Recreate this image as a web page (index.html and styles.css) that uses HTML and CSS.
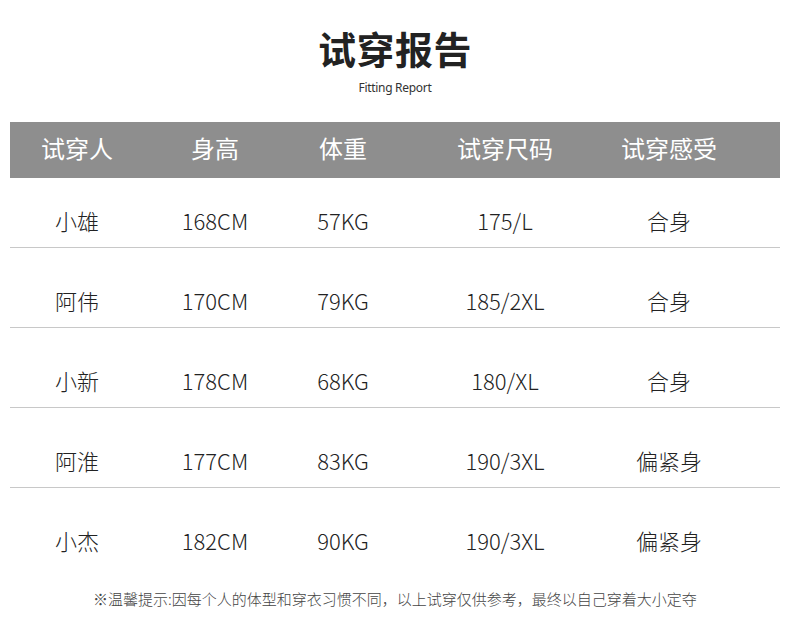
FILE: index.html
```html
<!DOCTYPE html>
<html lang="zh-CN">
<head>
<meta charset="utf-8">
<title>试穿报告</title>
<link rel="stylesheet" href="styles.css">
</head>
<body>
<div class="page">
  <div class="title">试穿报告</div>
  <div class="subtitle">Fitting Report</div>
  <div class="table">
    <div class="row head">
      <div class="c c1">试穿人</div><div class="c c2">身高</div><div class="c c3">体重</div><div class="c c4">试穿尺码</div><div class="c c5">试穿感受</div>
    </div>
    <div class="row">
      <div class="c c1">小雄</div><div class="c c2">168CM</div><div class="c c3">57KG</div><div class="c c4">175/L</div><div class="c c5">合身</div>
    </div>
    <div class="row">
      <div class="c c1">阿伟</div><div class="c c2">170CM</div><div class="c c3">79KG</div><div class="c c4">185/2XL</div><div class="c c5">合身</div>
    </div>
    <div class="row">
      <div class="c c1">小新</div><div class="c c2">178CM</div><div class="c c3">68KG</div><div class="c c4">180/XL</div><div class="c c5">合身</div>
    </div>
    <div class="row">
      <div class="c c1">阿淮</div><div class="c c2">177CM</div><div class="c c3">83KG</div><div class="c c4">190/3XL</div><div class="c c5">偏紧身</div>
    </div>
    <div class="row last">
      <div class="c c1">小杰</div><div class="c c2">182CM</div><div class="c c3">90KG</div><div class="c c4">190/3XL</div><div class="c c5">偏紧身</div>
    </div>
  </div>
  <div class="note">※温馨提示:因每个人的体型和穿衣习惯不同，以上试穿仅供参考，最终以自己穿着大小定夺</div>
</div>
</body>
</html>
```
FILE: styles.css
```css
html, body {
  margin: 0;
  padding: 0;
  background: #ffffff;
}
.page {
  width: 790px;
  height: 630px;
  font-family: "Noto Sans CJK SC", "Noto Sans", sans-serif;
  color: #222;
  padding-top: 24px;
  box-sizing: border-box;
}
.title {
  text-align: center;
  font-size: 38px;
  line-height: 48px;
  font-weight: 700;
  color: #222;
  letter-spacing: 0.5px;
  margin-bottom: 8px;
}
.subtitle {
  text-align: center;
  font-family: "Noto Sans", sans-serif;
  font-size: 12px;
  line-height: 16px;
  color: #333;
  letter-spacing: -0.3px;
  margin-bottom: 26px;
}
.table {
  margin: 0 10px;
}
.row {
  display: grid;
  grid-template-columns: 134px 142px 114px 210px 118px 52px;
  padding-top: 37px;
  padding-bottom: 12px;
  border-bottom: 1px solid #c8c8c8;
  font-size: 22px;
  line-height: 30px;
  font-weight: 300;
  color: #222;
}
.row.head {
  background: #8e8e8e;
  color: #fff;
  font-size: 24px;
  font-weight: 400;
  padding: 11px 0 15px;
  border-bottom: none;
}
.row.head + .row {
  padding-top: 27px;
}
.row.last {
  border-bottom: none;
}
.c {
  text-align: center;
}
.note {
  margin-top: 22px;
  text-align: center;
  font-size: 15px;
  line-height: 20px;
  color: #444;
  font-weight: 300;
}
```
